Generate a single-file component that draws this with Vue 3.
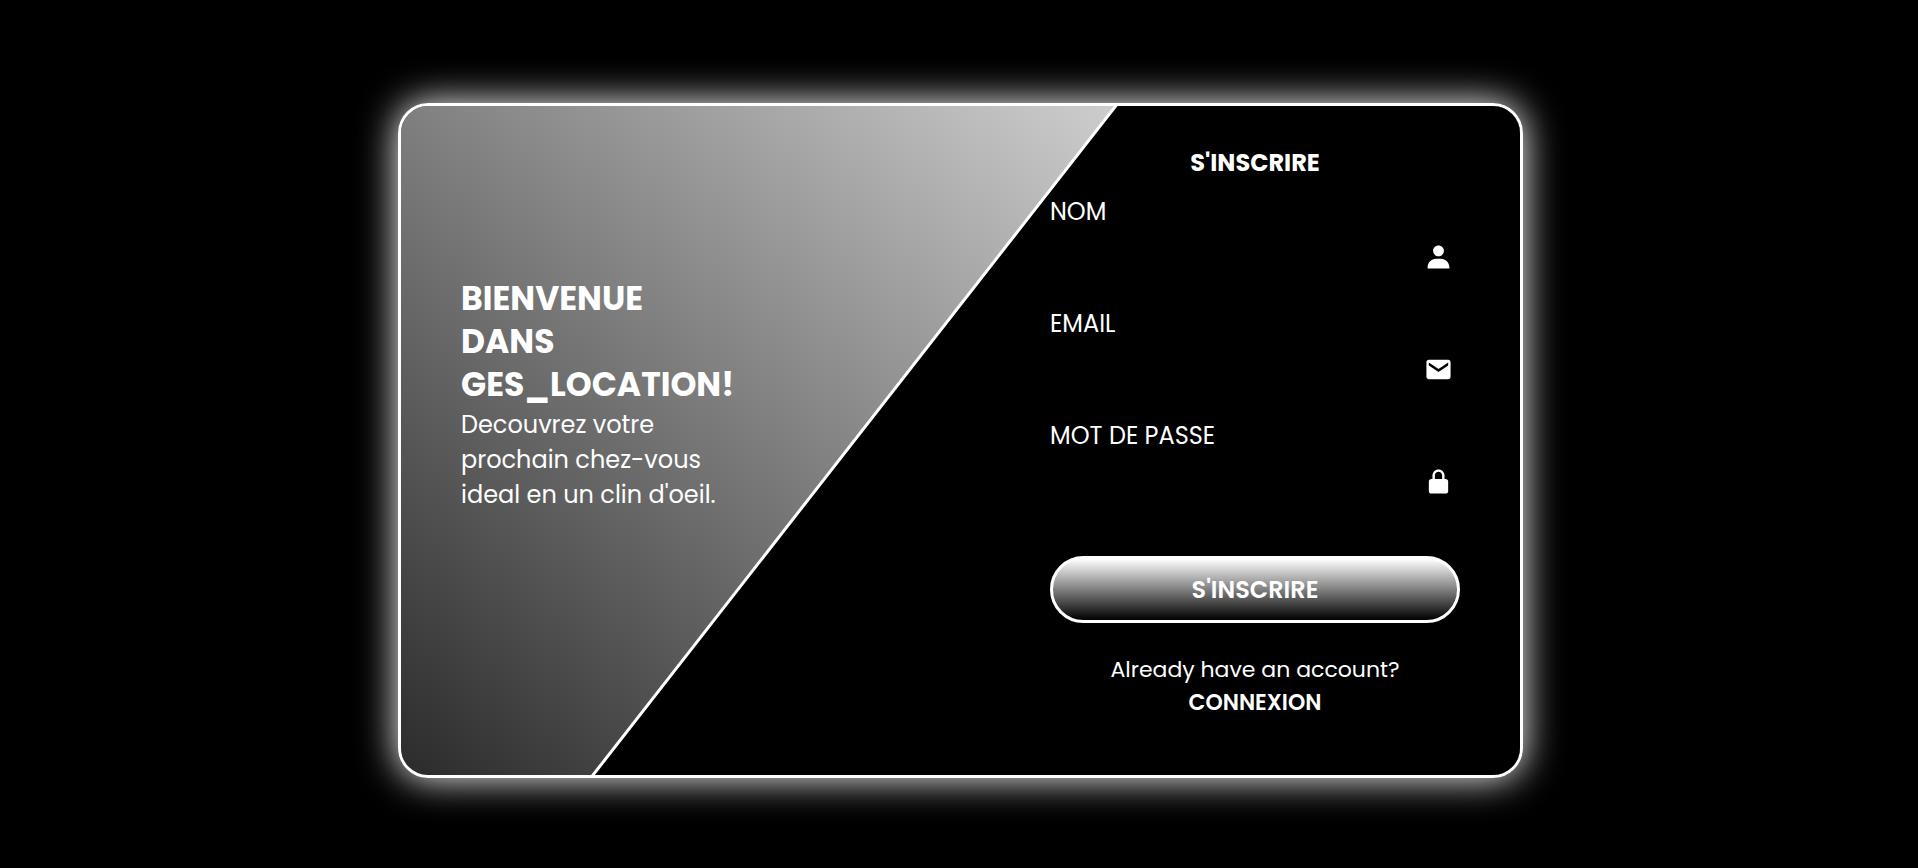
<script setup>
import { ref } from 'vue'

const fields = ref([
  {
    id: 'nom', label: 'NOM', type: 'text', value: '',
    icon: 'M7.5 6.5C7.5 8.981 9.519 11 12 11s4.5-2.019 4.5-4.5S14.481 2 12 2 7.5 4.019 7.5 6.5zM20 21h1v-1c0-3.859-3.141-7-7-7h-4c-3.86 0-7 3.141-7 7v1h17z'
  },
  {
    id: 'email', label: 'EMAIL', type: 'email', value: '',
    icon: 'M20 4H4c-1.103 0-2 .897-2 2v12c0 1.103.897 2 2 2h16c1.103 0 2-.897 2-2V6c0-1.103-.897-2-2-2zm0 4.7-8 5.334L4 8.7V6.297l8 5.333 8-5.333V8.7z'
  },
  {
    id: 'password', label: 'MOT DE PASSE', type: 'password', value: '',
    icon: 'M20 12c0-1.103-.897-2-2-2h-1V7c0-2.757-2.243-5-5-5S7 4.243 7 7v3H6c-1.103 0-2 .897-2 2v8c0 1.103.897 2 2 2h12c1.103 0 2-.897 2-2v-8zM9 7c0-1.654 1.346-3 3-3s3 1.346 3 3v3H9V7z'
  }
])
</script>

<template>
  <main class="page">
    <div class="card">
      <svg class="slant" viewBox="0 0 1119 669" preserveAspectRatio="none" aria-hidden="true">
        <path d="M730.3 -20 L176.4 689 L1160 689 L1160 -20 Z" fill="#000" stroke="#fff" stroke-width="3" />
      </svg>

      <section class="welcome">
        <h1>BIENVENUE<br />DANS<br />GES_LOCATION!</h1>
        <p>Decouvrez votre<br />prochain chez-vous<br />ideal en un clin d'oeil.</p>
      </section>

      <form class="signup" @submit.prevent>
        <h2>S'INSCRIRE</h2>
        <div v-for="field in fields" :key="field.id" class="field">
          <label :for="field.id">{{ field.label }}</label>
          <div class="entry">
            <input :id="field.id" v-model="field.value" :type="field.type" />
            <svg viewBox="0 0 24 24" aria-hidden="true"><path :d="field.icon" /></svg>
          </div>
        </div>
        <button type="submit">S'INSCRIRE</button>
        <p class="switch">Already have an account?<br /><a href="#">CONNEXION</a></p>
      </form>
    </div>
  </main>
</template>

<style>
body {
  background: #000;
}
</style>

<style scoped>
.page {
  box-sizing: border-box;
  min-height: 100vh;
  padding: 13px 0 0 3px;
  display: flex;
  align-items: center;
  justify-content: center;
  background: #000;
  color: #fff;
  font-family: Poppins, Inter, sans-serif;
}

.card {
  position: relative;
  box-sizing: border-box;
  width: 100%;
  max-width: 1125px;
  min-height: 675px;
  display: flex;
  justify-content: space-between;
  overflow: hidden;
  border: 3px solid #fff;
  border-radius: 30px;
  background: linear-gradient(41deg, #2b2b2b, #fafafa) padding-box;
  box-shadow: 0 0 38px #fff;
}

.slant {
  position: absolute;
  inset: 0;
  width: 100%;
  height: 100%;
}

.welcome,
.signup {
  position: relative;
}

.welcome {
  display: flex;
  flex-direction: column;
  justify-content: center;
  padding: 0 0 92px 60px;
}

h1,
h2,
p {
  margin: 0;
}

h1 {
  font-size: 33px;
  line-height: 43px;
  font-weight: 700;
}

.welcome p {
  padding-top: 1px;
  font-size: 24px;
  line-height: 35px;
}

.signup {
  width: 410px;
  padding: 37px 60px 55px 0;
  display: flex;
  flex-direction: column;
}

h2 {
  margin-bottom: 11px;
  font-size: 24px;
  line-height: 40px;
  font-weight: 700;
  text-align: center;
}

.field {
  margin-bottom: 32px;
}

.field label {
  display: block;
  margin-bottom: 10px;
  font-size: 24px;
  line-height: 36px;
}

.entry {
  display: flex;
  align-items: center;
  height: 34px;
  padding-right: 7px;
}

.entry input {
  flex: 1;
  min-width: 0;
  height: 100%;
  padding: 0;
  border: 0;
  outline: 0;
  background: transparent;
  color: #fff;
  font: inherit;
  font-size: 24px;
}

.entry svg {
  width: 29px;
  height: 29px;
  fill: #fff;
}

button {
  height: 67px;
  margin-top: 26px;
  border: 3px solid #fff;
  border-radius: 34px;
  background: linear-gradient(#fff, #000);
  color: #fff;
  font: inherit;
  font-size: 24px;
  font-weight: 600;
  cursor: pointer;
}

.switch {
  margin-top: 30px;
  font-size: 22px;
  line-height: 33px;
  text-align: center;
}

.switch a {
  color: #fff;
  font-weight: 600;
  text-decoration: none;
}
</style>
